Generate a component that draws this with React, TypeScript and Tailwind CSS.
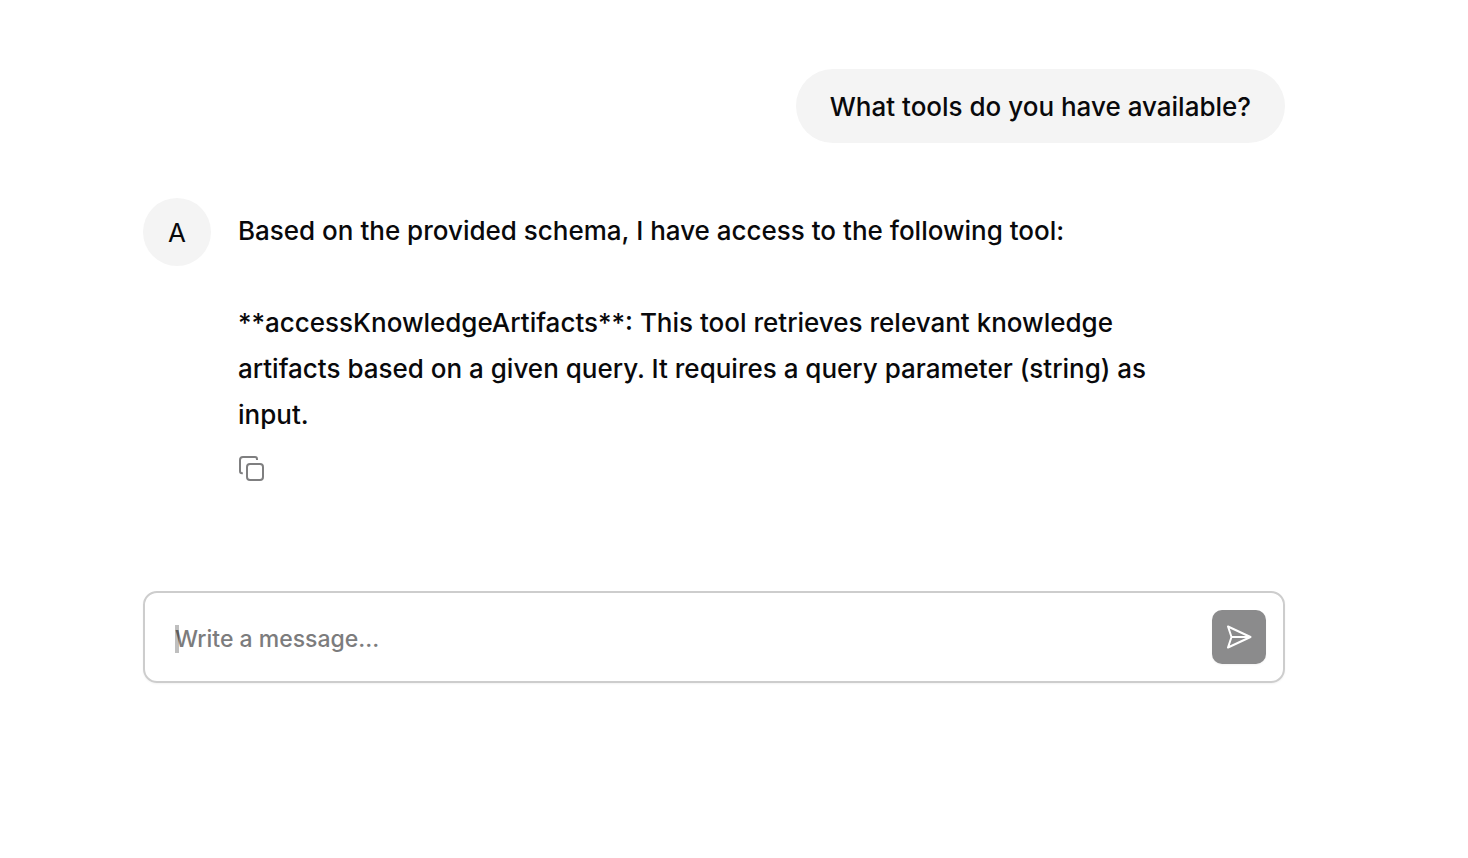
import { useState } from "react";

const ANSWER = [
  "Based on the provided schema, I have access to the following tool:",
  "**accessKnowledgeArtifacts**: This tool retrieves relevant knowledge artifacts based on a given query. It requires a query parameter (string) as input.",
];

function CopyIcon() {
  return (
    <svg
      viewBox="0 0 26 26"
      className="size-[26px]"
      fill="none"
      stroke="currentColor"
      strokeWidth="2"
      aria-hidden="true"
    >
      <rect x="9" y="8" width="16" height="16" rx="3" />
      <path d="M19 4V3.2C19 1.9 18.2 1 17 1H5C3.3 1 2 2.3 2 4v11c0 1.3.8 2.2 2 2.2h.8" />
    </svg>
  );
}

function SendIcon() {
  return (
    <svg
      viewBox="0 0 28 28"
      className="size-7"
      fill="none"
      stroke="currentColor"
      strokeWidth="2"
      strokeLinejoin="round"
      aria-hidden="true"
    >
      <path d="M3 3.5 25.5 14 3 24.5 6.5 14Z" />
      <path d="M7 14H25" />
    </svg>
  );
}

function Composer() {
  const [text, setText] = useState("");
  return (
    <form
      className="mt-[109px] flex items-center rounded-[14px] border-2 border-[#cdcdcd] py-[17px] pr-[17px] pl-[30px] shadow-xs"
      onSubmit={(event) => event.preventDefault()}
    >
      <div className="relative flex flex-1 items-center pt-1">
        <input
          type="text"
          aria-label="Message"
          placeholder="Write a message..."
          value={text}
          onChange={(event) => setText(event.target.value)}
          className="w-full bg-transparent text-[23px] leading-8 font-medium outline-none placeholder:text-[#7c7c7d]"
        />
        {text === "" && (
          <span className="pointer-events-none absolute left-0 h-7 w-1 bg-black/25" aria-hidden="true" />
        )}
      </div>
      <button
        type="submit"
        aria-label="Send"
        className="flex size-[54px] items-center justify-center rounded-[10px] bg-[#8b8b8c] text-white shadow-xs"
      >
        <SendIcon />
      </button>
    </form>
  );
}

export default function App() {
  return (
    <div className="min-h-screen bg-white pr-10 font-['Inter',sans-serif] text-[#09090b]">
      <main className="mx-auto flex max-w-[1142px] flex-col pt-[69px]">
        <div className="self-end rounded-full bg-[#f4f4f4] px-[34px] pt-[15px] pb-[13px] text-[26px] leading-[46px] font-medium">
          What tools do you have available?
        </div>

        <article className="mt-[55px] flex items-start gap-[27px]">
          <div className="flex size-[68px] shrink-0 items-center justify-center rounded-full bg-[#f4f4f4] text-[26px]">
            A
          </div>
          <div className="mt-[10px] max-w-[952px]">
            <div className="flex flex-col gap-[46px] text-[26px] leading-[46px] font-medium">
              {ANSWER.map((paragraph) => (
                <p key={paragraph}>{paragraph}</p>
              ))}
            </div>
            <button type="button" aria-label="Copy" className="mt-[18px] block text-[#7f7f80]">
              <CopyIcon />
            </button>
          </div>
        </article>

        <Composer />
      </main>
    </div>
  );
}
